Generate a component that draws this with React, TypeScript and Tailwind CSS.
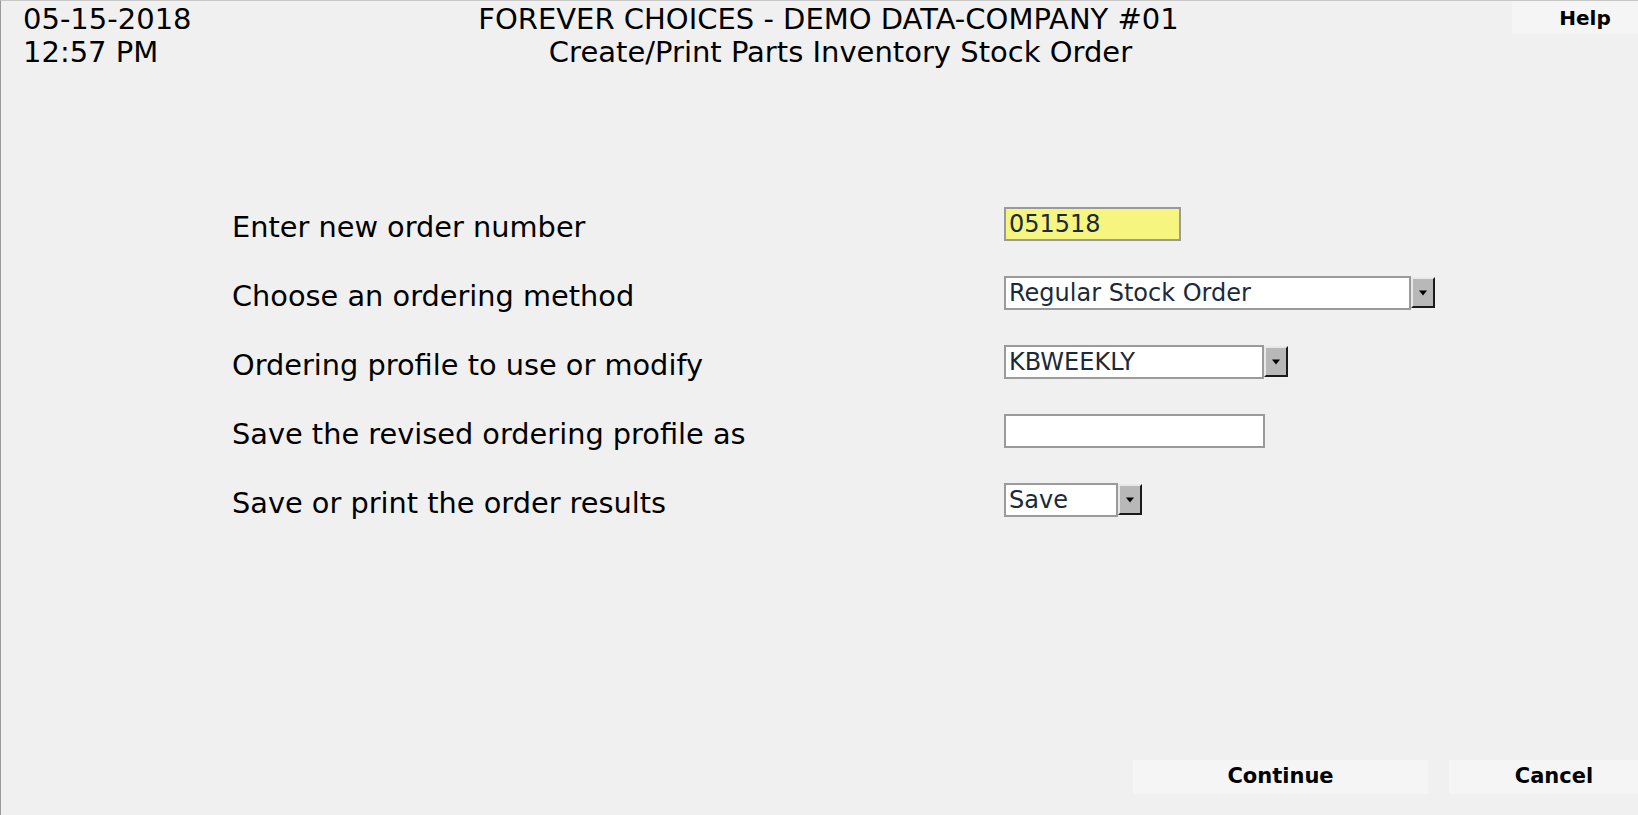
import React from "react";

const rows = [
  { label: "Enter new order number", kind: "order" },
  { label: "Choose an ordering method", kind: "method" },
  { label: "Ordering profile to use or modify", kind: "profile" },
  { label: "Save the revised ordering profile as", kind: "saveas" },
  { label: "Save or print the order results", kind: "output" },
];

function DropArrow() {
  return (
    <div className="flex h-[31px] w-[24px] items-center justify-center border-t-2 border-l-2 border-r-2 border-b-2 border-t-[#e8e8e8] border-l-[#e8e8e8] border-r-[#1a1a1a] border-b-[#1a1a1a] bg-[#b8b8b8]">
      <svg width="10" height="6" viewBox="0 0 10 6">
        <path d="M1 0.5 L9 0.5 L5 5.5 Z" fill="#000" />
      </svg>
    </div>
  );
}

function Select({ value, width }: { value: string; width: string }) {
  return (
    <div className="flex items-center">
      <div
        className={`flex h-[34px] items-center border-2 border-[#9a9a9a] bg-white pl-[3px] text-[24px] text-[#1b2a3a] ${width}`}
      >
        {value}
      </div>
      <DropArrow />
    </div>
  );
}

function Control({ kind }: { kind: string }) {
  if (kind === "order")
    return (
      <div className="flex h-[34px] w-[177px] items-center border-2 border-[#9a9a9a] bg-[#f5f580] pl-[3px] text-[24px] text-[#1b2a3a]">
        051518
      </div>
    );
  if (kind === "method") return <Select value="Regular Stock Order" width="w-[407px]" />;
  if (kind === "profile") return <Select value="KBWEEKLY" width="w-[260px]" />;
  if (kind === "saveas")
    return <div className="h-[34px] w-[261px] border-2 border-[#9a9a9a] bg-white" />;
  return <Select value="Save" width="w-[114px]" />;
}

export default function App() {
  return (
    <div
      className="flex h-[815px] w-full flex-col border-t border-l border-t-[#c8c8c8] border-l-[#9a9a9a] bg-[#f0f0f0] text-black"
      style={{ fontFamily: '"DejaVu Sans", Verdana, sans-serif' }}
    >
      <header className="flex items-start">
        <div className="w-[440px] pl-[22px] pt-[2px] text-[29px] leading-[33px]">
          <div>05-15-2018</div>
          <div>12:57 PM</div>
        </div>
        <div className="flex-1 pt-[2px] text-center text-[29px] leading-[33px]">
          <div className="pl-[18px]">FOREVER CHOICES - DEMO DATA-COMPANY #01</div>
          <div className="pl-[42px]">Create/Print Parts Inventory Stock Order</div>
        </div>
        <div className="flex w-[440px] justify-end">
          <button className="h-[33px] w-[126px] bg-[#f5f5f5] pl-[20px] text-[20px] font-bold">Help</button>
        </div>
      </header>

      <main className="mt-[124px] grid grid-cols-[772px_1fr] pl-[231px]">
        {rows.map((r) => (
          <React.Fragment key={r.label}>
            <div className="flex h-[69px] items-center text-[28.8px]">{r.label}</div>
            <div className="flex h-[69px] items-center pb-[8px]">
              <Control kind={r.kind} />
            </div>
          </React.Fragment>
        ))}
      </main>

      <footer className="mt-auto flex justify-end gap-[21px] pb-[21px]">
        <button className="h-[34px] w-[295px] bg-[#f5f5f5] text-[21px] font-bold">Continue</button>
        <button className="h-[34px] w-[189px] bg-[#f5f5f5] pl-[21px] text-[21px] font-bold">Cancel</button>
      </footer>
    </div>
  );
}
